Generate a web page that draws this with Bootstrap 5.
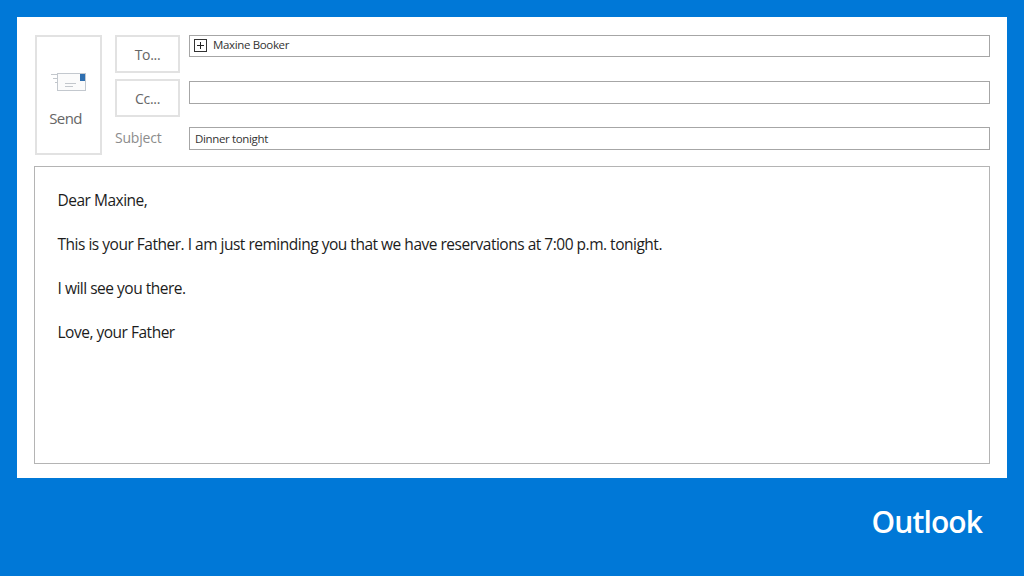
<!DOCTYPE html>
<html lang="en">
<head>
<meta charset="utf-8">
<title>Outlook</title>
<link rel="stylesheet" href="https://cdn.jsdelivr.net/npm/bootstrap@5.3.0/dist/css/bootstrap.min.css">
<style>
html,body{height:576px;overflow:hidden}
body{background:#0078d7;font-family:"Open Sans","Noto Sans",sans-serif;color:#222}
.stage{width:1024px;height:576px;padding:17px 17px 0}
.sheet{height:461px;background:#fff;padding:18px 17px 14px}
.head-row{height:120px;gap:13px;margin-bottom:11px;padding-left:1px}
.tile{background:#fff;border:2px solid #e2e2e2;border-radius:0;color:#666;padding:0;font-size:14px;letter-spacing:-.3px;line-height:1}
.send-tile{width:67px;height:120px;padding-top:35px}
.send-tile svg{display:block;margin-bottom:19px}
.send-lbl{font-size:15px;margin-right:6px;letter-spacing:-.6px}
.label-col{width:65px;gap:6px}
.small-tile{height:38px;width:65px;padding-top:2px}
.subj{font-size:14px;color:#8c8c8c;letter-spacing:-.2px;line-height:20px;margin-top:5px}
.field-col{margin-left:-4px}
.fld{height:23px;border:1px solid #a6a6a6;font-size:11.5px;letter-spacing:-.35px;color:#333;padding-left:5px;line-height:21px}
.fld+.fld{margin-top:23px}
.fld.to{height:22px;padding-left:4px;padding-bottom:3px}
.fld.to+.fld{margin-top:24px}
.plus{width:13px;height:13px;border:1px solid #333;margin-right:6px;margin-top:2px;flex:none}
.msg{height:298px;border:1px solid #b4b4b4;padding:22px 22.500px;font-size:15.5px;letter-spacing:-.49px;line-height:22px;color:#1c1c1c}
.msg p{margin:0 0 22px}
.brand{color:#fff;font-size:30px;font-weight:600;letter-spacing:-.9px;line-height:40px;padding:24px 25px 0 0}
</style>
</head>
<body>
<div class="stage">
  <div class="sheet">
    <div class="d-flex head-row">
      <button type="button" class="btn tile send-tile d-flex flex-column align-items-center">
        <svg width="36" height="20" viewBox="0 0 36 20" aria-hidden="true">
          <rect x="6.5" y="1.500" width="28" height="17" fill="#fbfbfb" stroke="#c3c8ce"/>
          <rect x="29" y="2" width="5" height="7" fill="#2f6fb0"/>
          <path d="M0 2.500h6M2 6.500h4M4 10.500h2M14 11.500h11M14 14.500h8" stroke="#c3c7cc" fill="none"/>
        </svg>
        <span class="send-lbl">Send</span>
      </button>
      <div class="d-flex flex-column label-col">
        <button type="button" class="btn tile small-tile">To...</button>
        <button type="button" class="btn tile small-tile">Cc...</button>
        <div class="subj">Subject</div>
      </div>
      <div class="flex-grow-1 field-col">
        <div class="fld to d-flex align-items-center">
          <span class="plus d-flex align-items-center justify-content-center">
            <svg width="7" height="7" viewBox="0 0 7 7" aria-hidden="true"><path d="M3.500 0v7M0 3.500h7" stroke="#222" fill="none"/></svg>
          </span>
          Maxine Booker
        </div>
        <div class="fld"></div>
        <div class="fld">Dinner tonight</div>
      </div>
    </div>
    <div class="msg">
      <p>Dear Maxine,</p>
      <p>This is your Father. I am just reminding you that we have reservations at 7:00 p.m. tonight.</p>
      <p>I will see you there.</p>
      <p>Love, your Father</p>
    </div>
  </div>
  <div class="brand text-end">Outlook</div>
</div>
<script src="https://cdn.jsdelivr.net/npm/bootstrap@5.3.0/dist/js/bootstrap.bundle.min.js"></script>
</body>
</html>
